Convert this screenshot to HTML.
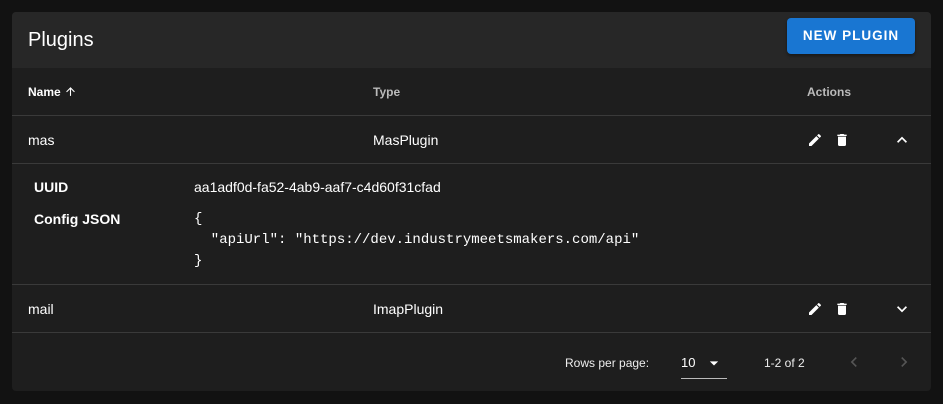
<!DOCTYPE html>
<html><head><meta charset="utf-8"><style>
*{box-sizing:border-box;margin:0;padding:0}
body{width:943px;height:404px;background:#121212;font-family:"Liberation Sans",sans-serif;color:#fff;overflow:hidden;position:relative}
.card{position:absolute;left:12px;top:12px;width:919px;height:379px;background:#1e1e1e;border-radius:4px;overflow:hidden}
.hdr{height:56px;background:#272727;position:relative}
.hdr .t{position:absolute;left:16px;top:17px;font-size:20px}
.btn{position:absolute;right:16px;top:6px;width:128px;height:36px;background:#1976d2;border-radius:4px;font-size:13.5px;font-weight:bold;letter-spacing:1px;text-align:center;line-height:36px;box-shadow:0 2px 3px rgba(0,0,0,.4)}
.row{position:absolute;left:0;width:919px;border-bottom:1px solid #3a3a3a}
.a{position:absolute;font-size:14px}
.th{font-size:12px;font-weight:bold;color:#bbb}
.mono{font-family:"Liberation Mono",monospace;font-size:14px;line-height:21px;white-space:pre}
</style></head><body>
<div class="card">
 <div class="hdr"><div class="t">Plugins</div><div class="btn">NEW PLUGIN</div></div>
 <div class="row" style="top:56px;height:48px">
  <div class="a th" style="left:16px;top:17px;color:#fff">Name <svg width="13" height="13" viewBox="0 0 24 24" style="vertical-align:-2px"><path d="M4 12l1.4 1.4L11 7.8V20h2V7.8l5.6 5.6L20 12l-8-8z" fill="#fff"/></svg></div>
  <div class="a th" style="left:361px;top:17px">Type</div>
  <div class="a th" style="left:795px;top:17px">Actions</div>
 </div>
 <div class="row" style="top:104px;height:48px">
  <div class="a" style="left:16px;top:16px">mas</div>
  <div class="a" style="left:361px;top:16px">MasPlugin</div>
  <svg class="a" style="left:795px;top:16px" width="16" height="16" viewBox="0 0 24 24"><path fill="#fff" d="M3 17.25V21h3.75L17.8 9.94l-3.75-3.75zM20.7 7.04a1 1 0 000-1.41l-2.34-2.34a1 1 0 00-1.41 0l-1.83 1.83 3.75 3.75z"/></svg>
  <svg class="a" style="left:822px;top:16px" width="16" height="16" viewBox="0 0 24 24"><path fill="#fff" d="M6 19c0 1.1.9 2 2 2h8c1.1 0 2-.9 2-2V7H6zM19 4h-3.5l-1-1h-5l-1 1H5v2h14z"/></svg>
  <svg class="a" style="left:880px;top:14px" width="20" height="20" viewBox="0 0 24 24"><path fill="#fff" d="M7.4 15.4L12 10.8l4.6 4.6L18 14l-6-6-6 6z"/></svg>
 </div>
 <div class="row" style="top:152px;height:121px">
  <div class="a" style="left:22px;top:15px;font-weight:bold">UUID</div>
  <div class="a" style="left:182px;top:15px">aa1adf0d-fa52-4ab9-aaf7-c4d60f31cfad</div>
  <div class="a" style="left:22px;top:47px;font-weight:bold">Config JSON</div>
  <div class="a mono" style="left:182px;top:45px">{
  "apiUrl": "https://dev.industrymeetsmakers.com/api"
}</div>
 </div>
 <div class="row" style="top:273px;height:48px">
  <div class="a" style="left:16px;top:16px">mail</div>
  <div class="a" style="left:361px;top:16px">ImapPlugin</div>
  <svg class="a" style="left:795px;top:16px" width="16" height="16" viewBox="0 0 24 24"><path fill="#fff" d="M3 17.25V21h3.75L17.8 9.94l-3.75-3.75zM20.7 7.04a1 1 0 000-1.41l-2.34-2.34a1 1 0 00-1.41 0l-1.83 1.83 3.75 3.75z"/></svg>
  <svg class="a" style="left:822px;top:16px" width="16" height="16" viewBox="0 0 24 24"><path fill="#fff" d="M6 19c0 1.1.9 2 2 2h8c1.1 0 2-.9 2-2V7H6zM19 4h-3.5l-1-1h-5l-1 1H5v2h14z"/></svg>
  <svg class="a" style="left:880px;top:14px" width="20" height="20" viewBox="0 0 24 24"><path fill="#fff" d="M7.4 8.6L12 13.2l4.6-4.6L18 10l-6 6-6-6z"/></svg>
 </div>
 <div class="a" style="left:553px;top:344px;font-size:12px;color:#eee">Rows per page:</div>
 <div class="a" style="left:669px;top:343px;font-size:13px">10</div>
 <svg class="a" style="left:692px;top:341px" width="20" height="20" viewBox="0 0 24 24"><path fill="#fff" d="M7 10l5 5 5-5z"/></svg>
 <div class="a" style="left:669px;top:366px;width:46px;height:1px;background:#bbb"></div>
 <div class="a" style="left:752px;top:344px;font-size:12px;color:#eee">1-2 of 2</div>
 <svg class="a" style="left:832px;top:340px" width="20" height="20" viewBox="0 0 24 24"><path fill="#555" d="M15.4 7.4L14 6l-6 6 6 6 1.4-1.4L10.8 12z"/></svg>
 <svg class="a" style="left:882px;top:340px" width="20" height="20" viewBox="0 0 24 24"><path fill="#555" d="M10 6L8.6 7.4 13.2 12l-4.6 4.6L10 18l6-6z"/></svg>
</div>
</body></html>
